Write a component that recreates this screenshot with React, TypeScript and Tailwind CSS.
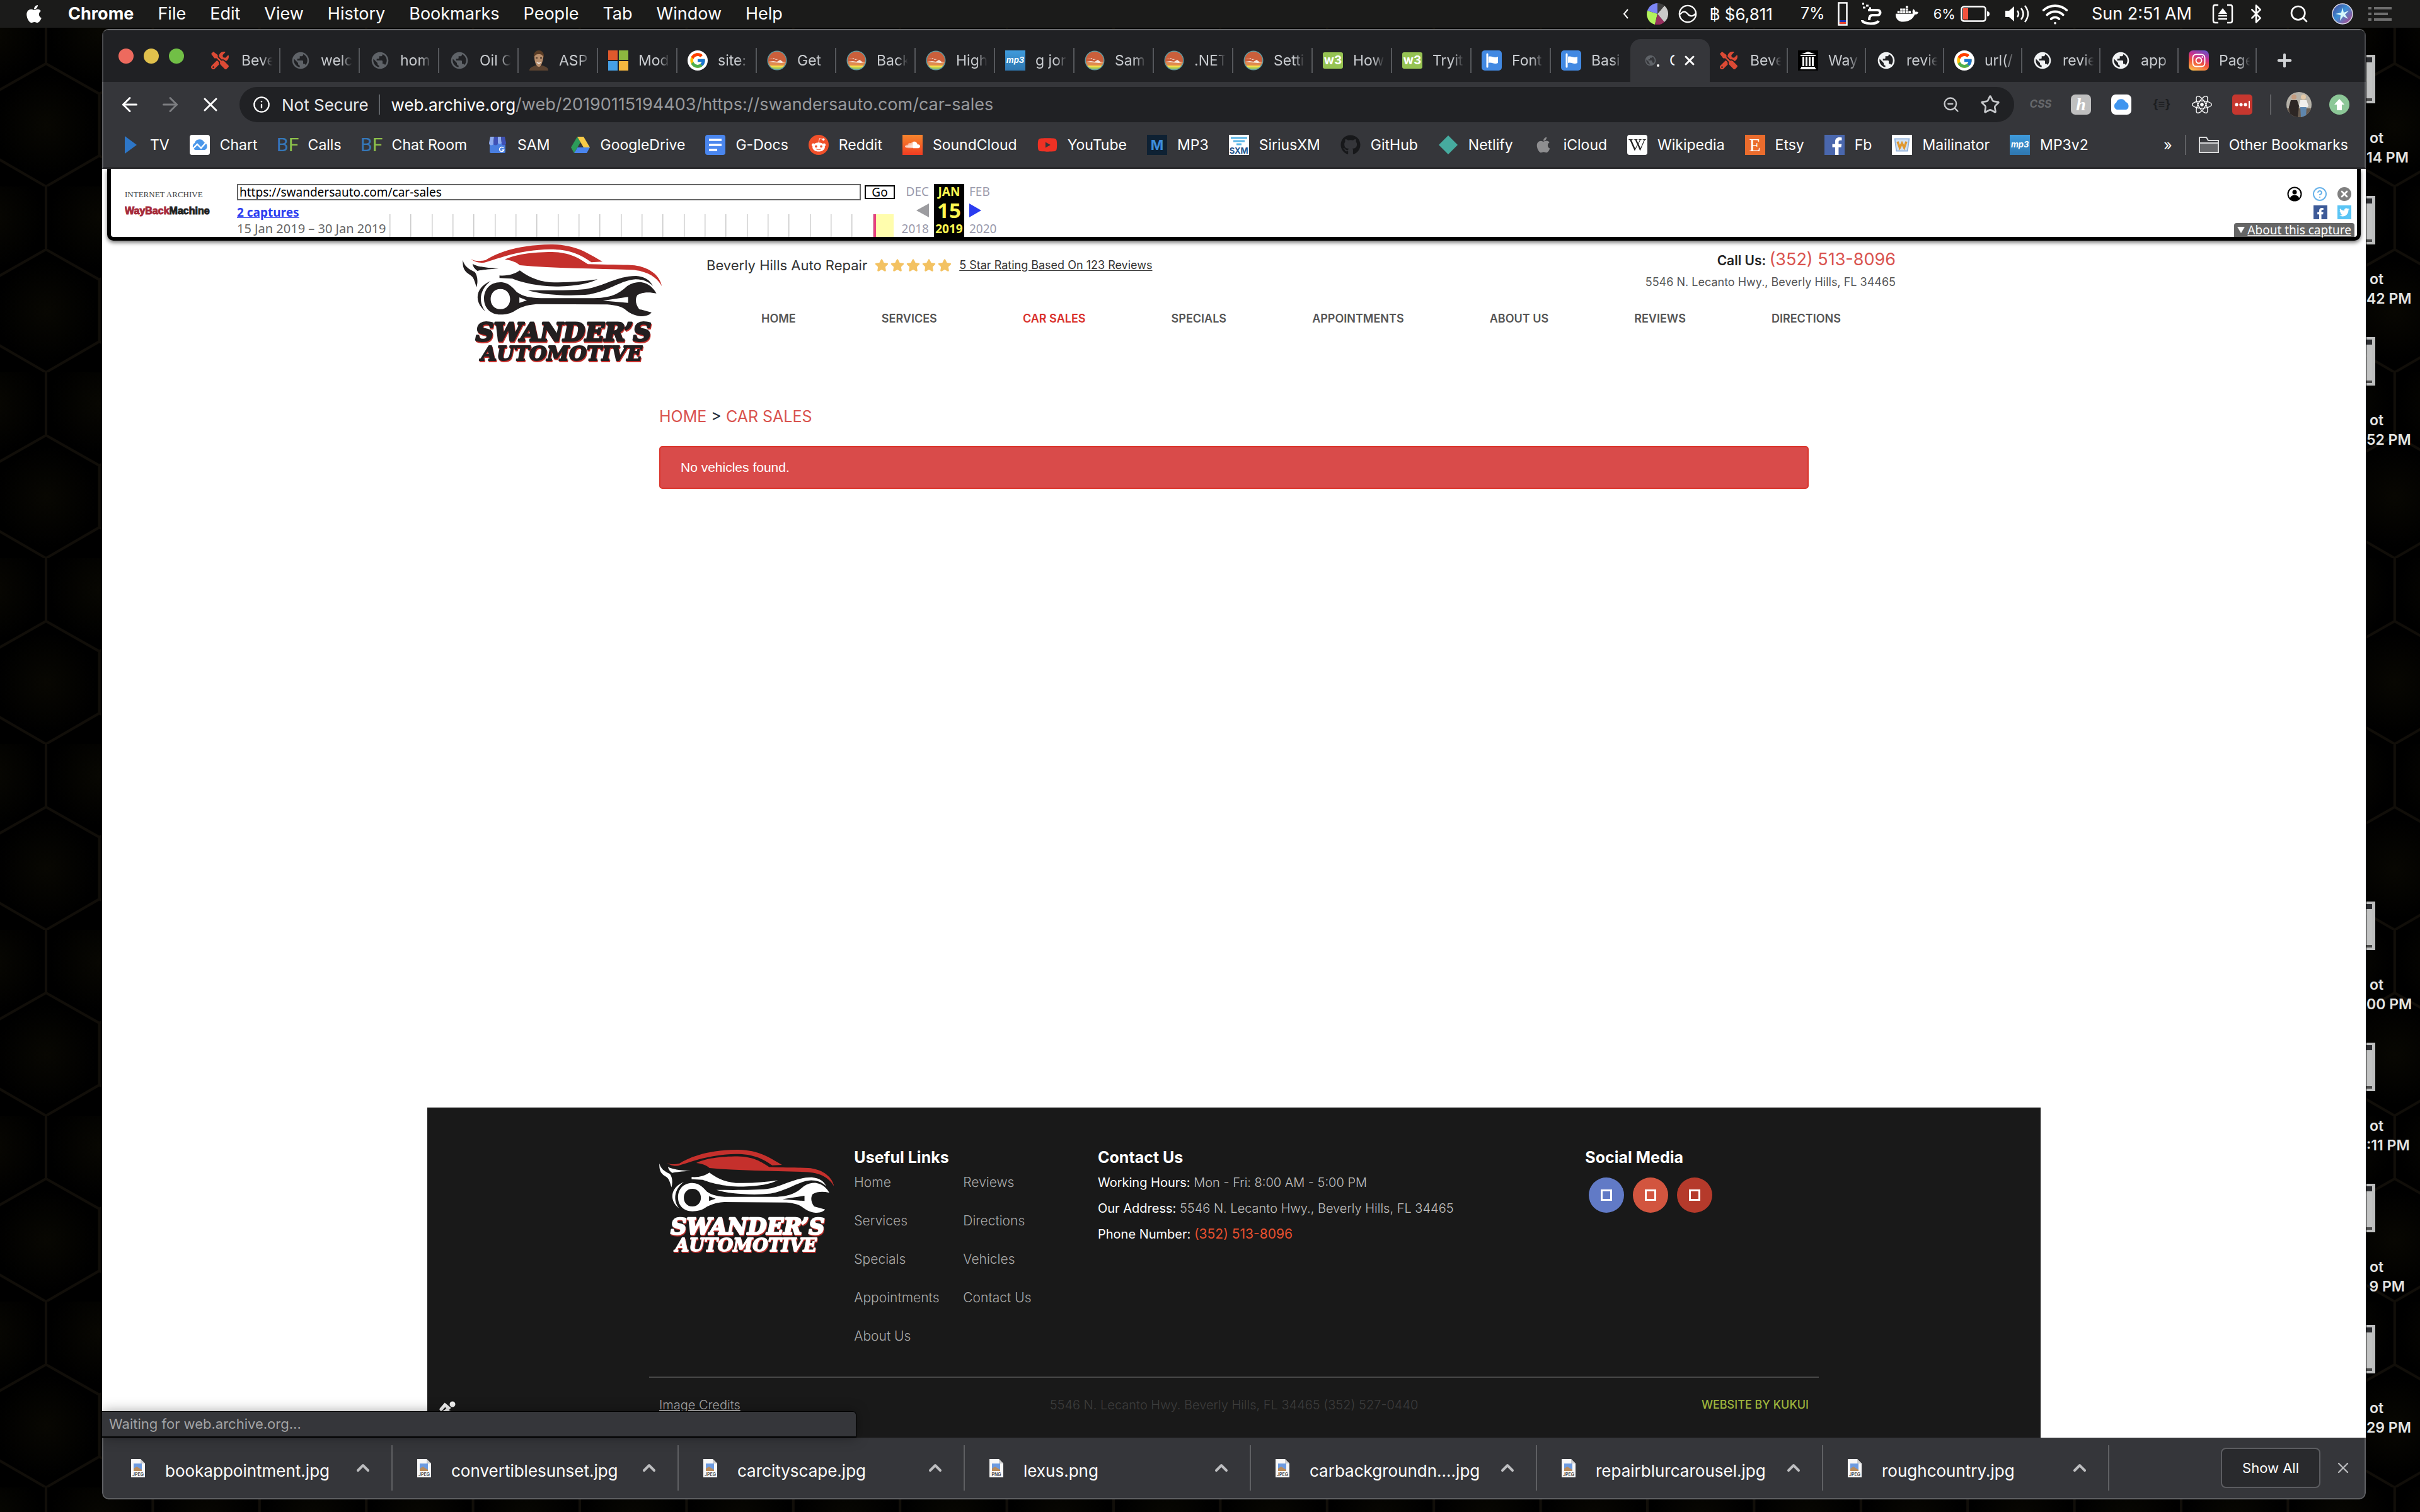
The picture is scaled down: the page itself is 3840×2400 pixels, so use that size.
import React from "react";
import {
  FaApple, FaDocker, FaFacebookF, FaGithub, FaInstagram, FaRedditAlien, FaReact, FaSoundcloud, FaTools,
  FaTwitter, FaWikipediaW, FaStar, FaYoutube,
} from "react-icons/fa";
import { FcGoogle } from "react-icons/fc";
import { MdPublic } from "react-icons/md";
import { ArrowLeft, ArrowRight, Bluetooth, ChevronUp, CircleHelp, Info, Plus, Search, Star, Wifi, X, ZoomOut } from "lucide-react";

/* ---------- favicons ---------- */

const Tile = ({ color, children }: { color: string; children?: React.ReactNode }) => (
  <span className={`flex size-8 shrink-0 items-center justify-center ${color}`}>{children}</span>
);

const ToolsIcon = () => <FaTools className="size-7 text-[#dc4a35]" />;
const GlobeDim = () => <MdPublic className="size-8 text-[#5f6368]" />;
const GlobeLight = () => <MdPublic className="size-8 text-[#f1f3f4]" />;

const SunsetIcon = () => (
  <svg viewBox="0 0 32 32" className="size-8">
    <clipPath id="sunset"><circle cx="16" cy="16" r="14" /></clipPath>
    <circle cx="16" cy="16" r="15.5" fill="#5f9aa0" />
    <g clipPath="url(#sunset)">
      <rect width="32" height="20" fill="#cb5f3b" />
      <rect y="19" width="32" height="5" fill="#e08a4f" />
      <rect y="24" width="32" height="3" fill="#f3e04a" />
      <rect y="27" width="32" height="5" fill="#a5c65a" />
      <path d="M3 13l5 1 3-2 3 3 4-1M2 18l8-1 6 1 5-3 4 3 6 0-8 2-10-1z" fill="#f7e9e0" />
    </g>
  </svg>
);

const MicrosoftIcon = () => (
  <svg viewBox="0 0 32 32" className="size-8">
    <path d="M0 0h15v15H0z" fill="#e0592c" />
    <path d="M17 0h15v15H17z" fill="#8cb73f" />
    <path d="M0 17h15v15H0z" fill="#45a0e6" />
    <path d="M17 17h15v15H17z" fill="#f6b83f" />
  </svg>
);

const PortraitIcon = () => (
  <svg viewBox="0 0 32 32" className="size-8">
    <path d="M1 32c0-5 5-6 9-8h12c5 2 9 3 9 8z" fill="#5b4331" />
    <path d="M9 11c0-8 4-10 7-10s8 3 7 10-3 15-7 15-7-8-7-15z" fill="#b98f6d" />
    <path d="M8 12C7 3 12 0 16 0s9 3 8 12c-2-5-4-6-8-6s-6 1-8 6z" fill="#5a3d26" />
    <path d="M12 18c2 2 6 2 8 0-1 4-7 4-8 0z" fill="#fff" />
    <path d="M11 12h3M18 12h3" stroke="#3a2a1c" strokeWidth="1.6" />
  </svg>
);

const GoogleIcon = () => (
  <span className="flex size-8 items-center justify-center rounded-full bg-white"><FcGoogle className="size-7" /></span>
);

const Mp3Icon = () => (
  <Tile color="bg-gradient-to-b from-[#3f9bdc] to-[#2f77b0]">
    <span className="font-[Inter] text-[13px] font-bold italic text-white">mp3</span>
  </Tile>
);
const W3Icon = () => (
  <span className="flex h-[26px] w-8 items-center justify-center rounded-[3px] bg-[#96c353] font-[Inter] text-[19px] font-bold text-white">w3</span>
);
const FlagIcon = () => (
  <Tile color="rounded-[5px] bg-[#4289e2]">
    <svg viewBox="0 0 32 32" className="size-8">
      <path d="M9 6v20" stroke="#fff" strokeWidth="3" strokeLinecap="round" />
      <path d="M11 10c5-2 9 3 15 0v10c-6 3-10-2-15 0z" fill="#fff" />
    </svg>
  </Tile>
);
const ArchiveIcon = () => (
  <Tile color="bg-black">
    <svg viewBox="0 0 32 32" className="size-8" fill="#f4f4f4">
      <path d="M16 2l11 4H5zM4 7h24v2H4zM5 26h22v2H5zM4 28h24v2H4z" />
      <path d="M7 10h3v15H7zM12 10h3v15h-3zM17 10h3v15h-3zM22 10h3v15h-3z" />
    </svg>
  </Tile>
);
const InstagramIcon = () => (
  <Tile color="rounded-[7px] bg-[linear-gradient(20deg,#fdc04e_5%,#f0553a_40%,#c9308f_65%,#5358cf_100%)]">
    <FaInstagram className="size-6 text-white" />
  </Tile>
);

/* ---------- bookmark icons ---------- */

const PlayIcon = () => (
  <svg viewBox="0 0 32 32" className="size-8"><path d="M8 2l19 14L8 30z" fill="#2d76c7" /></svg>
);
const CloudChartIcon = () => (
  <Tile color="rounded-[4px] bg-white">
    <svg viewBox="0 0 32 32" className="size-8">
      <path d="M9 24a6 6 0 0 1-1-11 8 8 0 0 1 15-1 6.500 6.500 0 0 1 1 12z" fill="#4a97ea" />
      <path d="M5 22l7-7 6 6 8-9" fill="none" stroke="#fff" strokeWidth="2.400" />
    </svg>
  </Tile>
);
const BfIcon = () => (
  <span className="flex w-8 justify-center font-[Roboto] text-[30px] leading-8">
    <span className="text-[#3577b8]">B</span><span className="text-[#8dc04a]">F</span>
  </span>
);
const StoreIcon = () => (
  <svg viewBox="0 0 32 32" className="size-8">
    <path d="M4 12h25v15a2 2 0 0 1-2 2H6a2 2 0 0 1-2-2z" fill="#4a7fe0" />
    <path d="M5 3h6l-1 10a3.500 3.500 0 0 1-7 0z" fill="#8fabee" />
    <path d="M11 3h6v10a3.500 3.500 0 0 1-7 0z" fill="#3f51b5" />
    <path d="M17 3h5l1 10a3.500 3.500 0 0 1-6 0z" fill="#8fabee" />
    <path d="M22 3h6l2 10a3.500 3.500 0 0 1-7 0z" fill="#3f51b5" />
    <path d="M26 21a3.500 3.500 0 1 0 .5 3h-3" fill="none" stroke="#fff" strokeWidth="1.600" />
  </svg>
);
const DriveIcon = () => (
  <svg viewBox="0 0 32 32" className="size-8">
    <path d="M11 3l5 9L6 29l-5-9z" fill="#2c9b5a" />
    <path d="M11 3h10l10 17H21z" fill="#f8cb47" />
    <path d="M11.500 20H31l-5 9H6z" fill="#4a85ee" />
  </svg>
);
const DocsIcon = () => (
  <Tile color="rounded-[4px] bg-[#4a86ee]">
    <svg viewBox="0 0 32 32" className="size-8" stroke="#fff" strokeWidth="3.500"><path d="M6 8h20M6 16h20M6 24h13" /></svg>
  </Tile>
);
const RedditIcon = () => <Tile color="rounded-full bg-[#f0502a]"><FaRedditAlien className="size-6 text-white" /></Tile>;
const SoundCloudIcon = () => (
  <Tile color="bg-gradient-to-b from-[#f5842d] to-[#f03a22]"><FaSoundcloud className="size-6 text-white" /></Tile>
);
const MIcon = () => (
  <Tile color="bg-[#0e2133]"><span className="font-[Inter] text-[22px] font-bold text-[#3d8ddb]">M</span></Tile>
);
const SiriusIcon = () => (
  <Tile color="flex-col bg-white">
    <svg viewBox="0 0 32 18" className="h-[18px] w-8" fill="none" stroke="#5bb5e6" strokeWidth="3">
      <path d="M3 4h26M7 9h18M12 14h8" />
    </svg>
    <span className="font-[Inter] text-[13px] font-bold leading-[13px] text-[#23528a]">SXM</span>
  </Tile>
);
const NetlifyIcon = () => <svg viewBox="0 0 32 32" className="size-8"><path d="M16 1l15 15-15 15L1 16z" fill="#46ab9f" /></svg>;
const WikiIcon = () => <Tile color="rounded-[4px] bg-white"><FaWikipediaW className="size-7 text-[#222]" /></Tile>;
const EtsyIcon = () => (
  <Tile color="bg-[#ea6c2d]"><span className="font-['Liberation_Serif'] text-[30px] leading-8 text-white">E</span></Tile>
);
const FbIcon = () => (
  <Tile color="bg-[#4a67ad]"><FaFacebookF className="mt-1 ml-2 size-7 text-white" /></Tile>
);
const MailinatorIcon = () => (
  <Tile color="bg-white">
    <svg viewBox="0 0 32 32" className="size-7">
      <path d="M3 5h26l-3 22H6z" fill="#cfdff2" stroke="#8fb1dc" strokeWidth="2" />
      <path d="M8 10l4 11 4-8 4 8 4-11" fill="none" stroke="#e0982f" strokeWidth="4" />
    </svg>
  </Tile>
);

/* ---------- data ---------- */

type Item = [React.FC, string];

const leftTabs: Item[] = [
  [ToolsIcon, "Beve"], [GlobeDim, "welc"], [GlobeDim, "hom"], [GlobeDim, "Oil C"], [PortraitIcon, "ASP"],
  [MicrosoftIcon, "Mod"], [GoogleIcon, "site:"], [SunsetIcon, "Get"], [SunsetIcon, "Back"], [SunsetIcon, "High"],
  [Mp3Icon, "g jor"], [SunsetIcon, "Sam"], [SunsetIcon, ".NET"], [SunsetIcon, "Setti"], [W3Icon, "How"],
  [W3Icon, "Tryit"], [FlagIcon, "Font"], [FlagIcon, "Basi"],
];
const rightTabs: Item[] = [
  [ToolsIcon, "Beve"], [ArchiveIcon, "Way"], [GlobeLight, "revie"], [GoogleIcon, "url(/"], [GlobeLight, "revie"],
  [GlobeLight, "app"], [InstagramIcon, "Page"],
];
const bookmarks: Item[] = [
  [PlayIcon, "TV"], [CloudChartIcon, "Chart"], [BfIcon, "Calls"], [BfIcon, "Chat Room"], [StoreIcon, "SAM"],
  [DriveIcon, "GoogleDrive"], [DocsIcon, "G-Docs"], [RedditIcon, "Reddit"], [SoundCloudIcon, "SoundCloud"],
  [() => <FaYoutube className="size-8 text-[#ee3124]" />, "YouTube"], [MIcon, "MP3"], [SiriusIcon, "SiriusXM"],
  [() => <FaGithub className="size-8 text-[#17181a]" />, "GitHub"], [NetlifyIcon, "Netlify"],
  [() => <FaApple className="size-7 text-[#8e8e90]" />, "iCloud"], [WikiIcon, "Wikipedia"], [EtsyIcon, "Etsy"],
  [FbIcon, "Fb"], [MailinatorIcon, "Mailinator"], [Mp3Icon, "MP3v2"],
];
const siteNav = ["HOME", "SERVICES", "CAR SALES", "SPECIALS", "APPOINTMENTS", "ABOUT US", "REVIEWS", "DIRECTIONS"];
const footerLinks = [
  ["Home", "Services", "Specials", "Appointments", "About Us"],
  ["Reviews", "Directions", "Vehicles", "Contact Us"],
];
const downloads = [
  "bookappointment.jpg", "convertiblesunset.jpg", "carcityscape.jpg", "lexus.png", "carbackgroundn....jpg",
  "repairblurcarousel.jpg", "roughcountry.jpg",
];
const desktopFiles = ["14 PM", "42 PM", "52 PM", "", "", "", "00 PM", ":11 PM", "9 PM", "29 PM"];

/* ---------- desktop ---------- */

const Wallpaper = () => (
  <svg className="absolute inset-0 size-full" aria-hidden="true">
    <defs>
      <radialGradient id="glow"><stop offset="0" stopColor="#080702" /><stop offset="1" stopColor="#000000" /></radialGradient>
      <pattern id="hex" width="169.4" height="295" patternUnits="userSpaceOnUse" x="73" y="1">
        <rect width="169.4" height="295" fill="#000" />
        <circle cx="84.700" cy="50" r="80" fill="url(#glow)" />
        <circle cx="0" cy="198" r="80" fill="url(#glow)" />
        <circle cx="169.4" cy="198" r="80" fill="url(#glow)" />
        <path
          d="M0 0v100L84.700 148v98L0 295M169.400 0v100L84.700 148M84.700 246L169.400 295"
          fill="none" stroke="#110e09" strokeWidth="4"
        />
      </pattern>
    </defs>
    <rect width="100%" height="100%" fill="url(#hex)" />
  </svg>
);

const DesktopFiles = () => (
  <aside className="absolute top-[87px] right-0 w-[85px] font-[Inter] text-[23px] font-semibold leading-[31px] text-[#e4e4e2]">
    {desktopFiles.map((name, i) => (
      <div key={i} className="h-[224px]">
        {name && (
          <>
            <div className="h-[77px] w-[14px] border-y-4 border-r-[5px] border-[#bdbebe] bg-[#c2c3c3]">
              <div className="h-2 bg-[#2b2c30]" />
              <div className="mt-[57px] h-1 bg-[#4a4a4a]" />
            </div>
            <p className="mt-10 pr-[58px] text-right">ot</p>
            <p className="pr-6 text-right whitespace-nowrap">{name}</p>
          </>
        )}
      </div>
    ))}
  </aside>
);

const MenuBar = () => (
  <header className="relative flex h-11 items-center bg-[#1b1b1a] pr-11 pl-[38px] font-[Inter] text-[27px] text-white">
    <FaApple className="size-8" />
    <nav className="ml-[38px] flex items-center gap-[38px]">
      <button className="font-bold">Chrome</button>
      {["File", "Edit", "View", "History", "Bookmarks", "People", "Tab", "Window", "Help"].map((m) => (
        <button key={m}>{m}</button>
      ))}
    </nav>
    <div className="ml-auto flex items-center whitespace-nowrap">
      <svg viewBox="0 0 10 16" className="h-4 w-[10px]"><path d="M8 1L2 8l6 7" fill="none" stroke="#fff" strokeWidth="2" /></svg>
      <svg viewBox="0 0 34 34" className="ml-7 size-[34px]">
        <path d="M17 17L17 0A17 17 0 0 0 1 12z" fill="#7c86f5" />
        <path d="M17 17L1 12a17 17 0 0 0 12 22z" fill="#b2f35c" />
        <path d="M17 17l-4 17a17 17 0 0 0 15-4z" fill="#99305f" />
        <path d="M17 17l11 13A17 17 0 0 0 28 4z" fill="#c9c9c9" />
        <path d="M17 17L28 4A17 17 0 0 0 17 0z" fill="#3d3d3d" />
      </svg>
      <svg viewBox="0 0 32 32" className="ml-4 size-[30px]" fill="none" stroke="#fff" strokeWidth="2.500">
        <circle cx="16" cy="16" r="14" /><path d="M3 17c5-6 9-6 13-1s8 5 14-1" />
      </svg>
      <span className="ml-5 text-[26px]">฿ $6,811</span>
      <span className="ml-11 text-[25px]">7%</span>
      <svg viewBox="0 0 16 38" className="ml-5 h-[38px] w-4">
        <rect x="1.500" y="1.500" width="13" height="35" fill="none" stroke="#fff" strokeWidth="2.500" />
        <path d="M3 29h10v3H3z" fill="#1d2fa8" /><path d="M3 32h10v3H3z" fill="#e5432f" />
      </svg>
      <svg viewBox="0 0 36 36" className="ml-5 size-9" fill="none" stroke="#fff" strokeWidth="4">
        <path d="M12 12h15c6 0 6 8 0 8h-8c-4 0-5 3-5 8" /><path d="M3 28c0 7 24 7 26 1" />
        <path d="M3 2h3M9 5h4M4 8h4M14 9h3" strokeWidth="3" />
      </svg>
      <FaDocker className="ml-5 size-9" />
      <span className="ml-6 text-[22px]">6%</span>
      <svg viewBox="0 0 46 26" className="ml-2 h-[26px] w-[46px]">
        <rect x="1.500" y="1.500" width="38" height="23" rx="4" fill="none" stroke="#fff" strokeWidth="2.500" />
        <rect x="4" y="4" width="8" height="18" fill="#f0523d" /><path d="M42 9a4 4 0 0 1 0 8z" fill="#fff" />
      </svg>
      <svg viewBox="0 0 42 32" className="ml-6 h-8 w-[42px]" fill="none" stroke="#fff" strokeWidth="2.500">
        <path d="M1 11h6l8-7v24l-8-7H1z" fill="#fff" stroke="none" />
        <path d="M20 11q4 5 0 10M26 7q7 9 0 18M32 3q10 13 0 26" />
      </svg>
      <Wifi className="ml-4 size-11" strokeWidth={2} />
      <span className="ml-9">Sun 2:51 AM</span>
      <svg viewBox="0 0 34 32" className="ml-8 h-8 w-[34px]" fill="none" stroke="#fff" strokeWidth="2.500">
        <path d="M10 2H5q-3 0-3 3v22q0 3 3 3h5M24 2h5q3 0 3 3v22q0 3-3 3h-5" />
        <path d="M17 7l7 9H10z" fill="#fff" stroke="none" /><path d="M10 19h14M10 24h14" />
      </svg>
      <Bluetooth className="ml-5 size-8" />
      <Search className="ml-9 size-8" />
      <svg viewBox="0 0 34 34" className="ml-9 size-[34px]">
        <defs>
          <linearGradient id="siri" x1="0" y1="0" x2="1" y2="1">
            <stop offset="0" stopColor="#4a3f8c" /><stop offset=".45" stopColor="#3b8fd6" /><stop offset="1" stopColor="#c23a7c" />
          </linearGradient>
        </defs>
        <circle cx="17" cy="17" r="16" fill="url(#siri)" stroke="#d8d8e8" strokeWidth="1.500" />
        <path d="M17 7l2 8 8-3-6 6 5 7-8-4-5 7 1-9-8-2 9-2z" fill="#d6f7fb" />
      </svg>
      <svg viewBox="0 0 38 24" className="ml-6 h-6 w-[38px]" stroke="#6e6e6e" strokeWidth="4">
        <path d="M0 3h5M9 3h28M0 12h5M9 12h22M0 21h5M9 21h28" />
      </svg>
    </div>
  </header>
);

/* ---------- browser chrome ---------- */

const Tab = ({ item, narrow }: { item: Item; narrow?: boolean }) => {
  const Icon = item[0];
  return (
    <button className={`flex h-[68px] shrink-0 items-center ${narrow ? "w-[124px]" : "w-[126px]"}`}>
      <span className="flex h-10 w-full items-center gap-4 border-r-2 border-[#55575b] pl-4">
        <span className="flex w-8 shrink-0 items-center"><Icon /></span>
        <span className="w-[54px] overflow-hidden text-left whitespace-nowrap text-[#c8cbcf] [mask-image:linear-gradient(to_right,#000_60%,transparent_92%)]">
          {item[1]}
        </span>
      </span>
    </button>
  );
};

const TabStrip = () => (
  <div className="flex h-[82px] items-end border-x-2 border-[#48494c] bg-[#202124] pl-6 font-[Inter] text-[23px]">
    <div className="flex h-full shrink-0 items-center gap-4">
      <button aria-label="Close" className="size-6 rounded-full bg-[#ed6a5e]" />
      <button aria-label="Minimize" className="size-6 rounded-full bg-[#e0c04c]" />
      <button aria-label="Zoom" className="size-6 rounded-full bg-[#71bf46]" />
    </div>
    <div className="ml-[27px] flex items-end">
      {leftTabs.slice(0, 17).map((t, i) => <Tab key={i} item={t} />)}
      <div className="[&_span]:border-transparent"><Tab item={leftTabs[17]} /></div>
      <div className="flex h-[68px] w-[126px] items-center rounded-t-2xl bg-[#35363a] pl-[22px] text-white">
        <MdPublic className="size-5 text-[#5f6368]" />
        <span className="mt-4 size-1 rounded-full bg-white" />
        <span className="ml-4 w-2 overflow-hidden">C</span>
        <button aria-label="Close tab" className="ml-3"><X className="size-6" strokeWidth={3} /></button>
      </div>
      {rightTabs.map((t, i) => <Tab key={i} item={t} narrow />)}
    </div>
    <button aria-label="New tab" className="ml-7 flex h-[68px] items-center"><Plus className="size-8 text-[#d0d2d5]" strokeWidth={3} /></button>
  </div>
);

const Toolbar = () => (
  <div className="flex h-[72px] items-center border-x-2 border-[#5f6063] bg-[#35363a] pr-6 pl-6 font-[Inter] text-[26px] text-white">
    <div className="flex items-center gap-7">
      <button aria-label="Back"><ArrowLeft className="size-9" /></button>
      <button aria-label="Forward"><ArrowRight className="size-9 text-[#7c7d80]" /></button>
      <button aria-label="Stop"><X className="size-9" /></button>
    </div>
    <div className="ml-7 flex h-14 flex-1 items-center rounded-full bg-[#202124] pr-[22px] pl-[21px]">
      <Info className="size-7" />
      <span className="ml-[18px] text-[#e8eaed]">Not Secure</span>
      <span className="ml-4 h-8 w-0.5 bg-[#5f6368]" />
      <label htmlFor="address" className="ml-[18px]">web.archive.org</label>
      <input
        id="address" type="text" defaultValue="/web/20190115194403/https://swandersauto.com/car-sales"
        className="min-w-0 flex-1 bg-transparent text-[27px] text-[#97999c] outline-none"
      />
      <button aria-label="Zoom page"><ZoomOut className="size-7 text-[#c6c8cb]" /></button>
      <button aria-label="Bookmark page" className="ml-8"><Star className="size-8 text-[#c6c8cb]" /></button>
    </div>
    <div className="ml-[26px] flex items-center gap-8">
      <span className="flex w-8 justify-center text-[17px] font-bold italic text-[#66686b]">CSS</span>
      <Tile color="rounded-[7px] bg-[#bfbfbf]"><span className="font-['Liberation_Serif'] text-[28px] font-bold italic leading-8 text-white">h</span></Tile>
      <Tile color="rounded-[7px] bg-white">
        <svg viewBox="0 0 32 32" className="size-8"><path d="M9 24a6 6 0 0 1-1-11 8 8 0 0 1 15-1 6.500 6.500 0 0 1 1 12z" fill="#3f95ef" /></svg>
      </Tile>
      <span className="flex w-8 justify-center text-[19px] font-bold text-[#1c1d1f]">{"{≡}"}</span>
      <FaReact className="size-8" />
      <Tile color="rounded-[5px] bg-[#c7372f]">
        <svg viewBox="0 0 32 32" className="size-8" fill="#fff">
          <circle cx="7" cy="16" r="2.600" /><circle cx="14" cy="16" r="2.600" /><circle cx="21" cy="16" r="2.600" /><path d="M26 10h2v12h-2z" />
        </svg>
      </Tile>
    </div>
    <span className="ml-7 h-8 w-0.5 bg-[#5f6063]" />
    <svg viewBox="0 0 40 40" className="ml-6 size-10">
      <clipPath id="avatar"><circle cx="20" cy="20" r="20" /></clipPath>
      <g clipPath="url(#avatar)">
        <rect width="40" height="40" fill="#b5b1a8" /><rect y="26" width="40" height="14" fill="#6a5d50" />
        <circle cx="12" cy="8" r="4" fill="#c59c80" /><path d="M7 13h10l3 9-2 18H6L4 24z" fill="#2d2624" />
        <circle cx="27" cy="8" r="4" fill="#e3c9a8" /><path d="M22 13h10l3 9-3 4h-9l-3-5z" fill="#f1efec" /><path d="M22 24h10l-1 16h-8z" fill="#5f86ad" />
      </g>
    </svg>
    <span className="ml-7 flex size-8 items-center justify-center rounded-full bg-[#8cc797]">
      <svg viewBox="0 0 18 20" className="h-5 w-[18px]"><path d="M9 1l8 9h-4v9H5v-9H1z" fill="#fff" /></svg>
    </span>
  </div>
);

const BookmarksBar = () => (
  <div className="border-x-2 border-b-[3px] border-x-[#5f6063] border-b-[#2a2a2d] bg-[#35363a] pb-[7px] font-[Inter] text-[23px] text-white">
    <div className="flex h-14 items-center pr-[26px] pl-[26px]">
      <nav className="flex items-center gap-8">
        {bookmarks.map(([Icon, label]) => (
          <a key={label} href="#" className="flex items-center gap-4 whitespace-nowrap">
            <span className="flex w-8 shrink-0 justify-center"><Icon /></span>
            {label}
          </a>
        ))}
      </nav>
      <button className="ml-auto" aria-label="More bookmarks">»</button>
      <span className="mx-5 h-8 w-0.5 bg-[#5f6063]" />
      <button className="flex items-center gap-4">
        <svg viewBox="0 0 32 28" className="h-7 w-8" fill="none" stroke="#d8d9da" strokeWidth="2">
          <path d="M1 26V2h11l3 5h16v19z" /><path d="M1 11h30v15H1z" fill="#66676a" />
        </svg>
        Other Bookmarks
      </button>
    </div>
  </div>
);

/* ---------- archive banner ---------- */

const CaptureChart = () => (
  <svg viewBox="0 0 800 36" className="h-9 w-[800px] self-end">
    <path d="M768 0h32v36h-32z" fill="#fffdad" />
    {Array.from({ length: 24 }, (_, i) => (
      <rect key={i} x={Math.round((i * 800) / 24)} y="0" width="1.500" height="36" fill="#ccc" />
    ))}
    <path d="M768 0h4v36h-4z" fill="#e8417e" />
  </svg>
);

const ArchiveBanner = () => (
  <section className="mx-2 flex h-[114px] rounded-b-[10px] border-x-[6px] border-b-[6px] border-black bg-white font-['Noto_Sans'] text-[19px] leading-[25px] shadow-[0_3px_6px_rgba(0,0,0,0.55)]">
    <a href="#" aria-label="Internet Archive Wayback Machine" className="mt-9 ml-[22px] w-[178px]">
      <svg viewBox="0 0 140 48" className="h-12 w-[140px]">
        <text x="0" y="9" fontFamily="Liberation Serif" fontSize="13" fill="#444">INTERNET ARCHIVE</text>
        <text x="0" y="36" fontFamily="Liberation Sans" fontWeight="700" fontSize="16" fill="#a62a3a" stroke="#a62a3a" strokeWidth="1">
          WayBack<tspan fill="#222" stroke="#222">Machine</tspan>
        </text>
      </svg>
    </a>
    <div className="mt-6 flex w-[1044px] flex-col text-[#666]">
      <form className="flex items-center gap-[6px] text-black">
        <input
          type="text" aria-label="Archived address" defaultValue="https://swandersauto.com/car-sales"
          className="h-[26px] min-w-0 flex-1 border-2 border-[#666] bg-white px-0.5"
        />
        <button type="button" className="h-[22px] w-12 border-2 border-black leading-[17px]">Go</button>
      </form>
      <div className="flex flex-1 justify-between pt-[7px] pr-0.5">
        <div className="whitespace-nowrap">
          <a href="#" className="block font-bold text-[#2a3bf0] underline">2 captures</a>
          <p className="text-[20px]">15 Jan 2019 – 30 Jan 2019</p>
        </div>
        <CaptureChart />
      </div>
    </div>
    <table className="mt-6 h-[84px] text-[#9a9aac]">
      <tbody>
        <tr>
          <td className="w-[62px] pr-2 text-right">DEC</td>
          <td className="w-12 bg-black text-center font-bold text-[#fdf751]">JAN</td>
          <td className="w-[62px] pl-2">FEB</td>
        </tr>
        <tr>
          <td className="pr-2">
            <svg viewBox="0 0 20 22" className="ml-auto h-[22px] w-5"><path d="M20 0v22L0 11z" fill="#9c9ca0" /></svg>
          </td>
          <td className="bg-black text-center text-[33px] font-bold leading-[34px] text-[#fdf751]">15</td>
          <td className="pl-2"><svg viewBox="0 0 20 22" className="h-[22px] w-5"><path d="M0 0v22l19-11z" fill="#2a3bf0" /></svg></td>
        </tr>
        <tr>
          <td className="pr-2 text-right">2018</td>
          <td className="bg-black text-center font-bold text-[#fdf751]">2019</td>
          <td className="pl-2">2020</td>
        </tr>
      </tbody>
    </table>
    <div className="ml-auto flex flex-col items-end justify-end gap-[6px] pr-1">
      <div className="flex items-center gap-4 pr-[5px]">
        <svg viewBox="0 0 24 24" className="size-6">
          <circle cx="12" cy="12" r="10.500" fill="none" stroke="#000" strokeWidth="2" />
          <circle cx="12" cy="9" r="3.500" /><path d="M5 19c0-7 14-7 14 0-4 4-10 4-14 0z" />
        </svg>
        <CircleHelp className="size-6 text-[#69b3ea]" />
        <span className="flex size-[22px] items-center justify-center rounded-full bg-[#808080]"><X className="size-4 text-white" strokeWidth={4} /></span>
      </div>
      <div className="flex items-center gap-4 pr-[5px]">
        <span className="flex size-[22px] items-end justify-center bg-[#3d5a98]"><FaFacebookF className="size-[18px] text-white" /></span>
        <span className="flex size-[22px] items-center justify-center bg-[#5bc5f5]"><FaTwitter className="size-4 text-white" /></span>
      </div>
      <button className="flex h-[22px] items-center gap-1 rounded-t-[4px] bg-[#666] px-[5px] leading-[22px] text-white">
        <svg viewBox="0 0 12 10" className="h-[10px] w-3"><path d="M0 0h12L6 10z" fill="#fff" /></svg>
        <span className="underline">About this capture</span>
      </button>
    </div>
  </section>
);

/* ---------- dealership site ---------- */

const SwanderLogo = ({ ink, className }: { ink: string; className: string }) => (
  <svg viewBox="0 0 316 188" className={className} role="img" aria-label="Swander's Automotive">
    <g transform="matrix(0.7015 0 0 0.3333 -584 -138)" fill={ink}>
      <g fill="#c5302c">
        <path d="M851 484C862 496 872 494 885 488C905 462 950 415 1035 414C1090 416 1115 455 1149 496L1124 499C1100 462 1075 437 1030 437C960 440 915 480 882 500C868 504 860 496 851 484Z" />
        <path d="M928 486C950 462 990 450 1035 450C1075 452 1095 478 1116 508C1160 511 1190 510 1217 513C1250 518 1278 555 1283 612C1275 580 1255 540 1215 535C1130 528 1040 528 962 513C955 500 945 490 928 486Z" />
      </g>
      <path d="M833 488C836 515 845 530 860 545C866 560 868 590 864 618C860 590 858 570 850 560C838 545 832 530 833 488Z" />
      <path d="M855 506C865 520 885 525 914 529C890 532 875 536 866 540C860 530 856 520 855 506Z" />
      <path d="M962 538C975 560 1000 590 1030 594C1070 597 1105 590 1138 580C1120 600 1090 612 1050 614C1000 616 960 590 945 577L916 574L916 562C935 565 950 555 962 538Z" />
      <path d="M980 632C1030 633 1080 633 1110 627C1150 615 1180 565 1225 564C1248 568 1258 590 1263 612C1252 590 1240 580 1224 580C1190 585 1170 630 1120 652C1070 663 1010 652 980 632Z" />
      <path d="M896 588C860 620 858 690 884 732C868 690 870 630 896 588Z" />
      <path
        fillRule="evenodd"
        d="M918 594C938 594 948 625 956 642C970 662 985 668 1010 670L1130 670C1175 668 1190 640 1205 612C1215 598 1228 592 1237 594C1255 600 1265 625 1271 647C1255 640 1240 640 1228 655C1222 675 1224 700 1232 722L1260 738C1255 752 1245 756 1235 756C1220 752 1210 740 1203 728C1195 712 1180 703 1160 700L1000 698C975 702 962 715 952 728C942 742 932 748 918 748C895 748 881 715 881 672C881 628 895 594 918 594ZM918 626C904 626 896 648 896 674C896 700 904 722 918 722C932 722 940 700 940 674C940 648 932 626 918 626ZM961 666L978 680L961 692ZM1150 682L1207 664L1207 692Z"
      />
    </g>
    <g
      fontFamily="DejaVu Serif" fontWeight="700" fontStyle="italic" textAnchor="middle" strokeLinejoin="round"
      fill={ink} stroke={ink} strokeWidth="3" className="drop-shadow-[1px_2px_0_#c5302c]"
    >
      <text x="160" y="153" fontSize="40">SWANDER’S</text>
      <text x="157" y="184" fontSize="32" strokeWidth="2">AUTOMOTIVE</text>
    </g>
  </svg>
);

const SiteHeader = () => (
  <header className="mx-auto mt-[6px] flex w-full max-w-[2448px] pr-[174px] font-[Inter]">
    <a href="#" className="shrink-0"><SwanderLogo ink="#231f20" className="h-[188px] w-[316px]" /></a>
    <div className="ml-[71px] flex-1 pt-[6px]">
      <div className="flex items-start justify-between">
        <div className="mt-[9px] flex items-center gap-3 text-[22px] leading-9 text-[#333]">
          <span>Beverly Hills Auto Repair</span>
          <span className="flex gap-[3px] text-[#f3c262]">
            {[0, 1, 2, 3, 4].map((i) => <FaStar key={i} className="size-[22px]" />)}
          </span>
          <a href="#" className="text-[18px] underline underline-offset-2">5 Star Rating Based On 123 Reviews</a>
        </div>
        <div className="text-right">
          <p className="text-[21px] font-semibold leading-9 text-[#222]">
            Call Us: <a href="#" className="text-[27px] font-normal text-[#d9534f]">(352) 513-8096</a>
          </p>
          <p className="text-[18px] leading-8 text-[#555]">5546 N. Lecanto Hwy., Beverly Hills, FL 34465</p>
        </div>
      </div>
      <nav className="mt-[27px] flex justify-between px-[87px] text-[18px] font-semibold leading-[30px] text-[#555]">
        {siteNav.map((n) => (
          <a key={n} href="#" className={n === "CAR SALES" ? "text-[#d9302b]" : ""}>{n}</a>
        ))}
      </nav>
    </div>
  </header>
);

const SiteMain = () => (
  <main className="mx-auto w-full max-w-[1824px] pt-[65px]">
    <p className="font-[Inter] text-[25px] leading-10 text-[#222b3a]">
      <a href="#" className="text-[#d9534f]">HOME</a> &gt; <a href="#" className="text-[#d9534f]">CAR SALES</a>
    </p>
    <div role="alert" className="mt-[27px] flex h-[68px] items-center rounded-[5px] border-2 border-[#db362d] bg-[#d94b4a] px-8 font-['Liberation_Sans'] text-[21px] text-white">
      No vehicles found.
    </div>
  </main>
);

const FooterHeading = ({ children }: { children: React.ReactNode }) => (
  <h2 className="text-[25px] font-bold leading-9 text-white">{children}</h2>
);

const socialColors = ["bg-[#617ac6]", "bg-[#d2553f]", "bg-[#b53a2b]"];

const SiteFooter = () => (
  <footer className="relative mx-auto mt-auto w-full max-w-[2560px] bg-[#191919] pt-[61px] pb-[37px] font-[Inter] text-[20px] text-[#aaa]">
    <div className="mx-auto w-full max-w-[1856px]">
      <div className="grid grid-cols-[4fr_5fr_10fr_5fr]">
        <div className="px-4 pt-[6px]"><SwanderLogo ink="#ffffff" className="w-full" /></div>
        <div className="px-4">
          <FooterHeading>Useful Links</FooterHeading>
          <div className="mt-[6px] flex text-[21px] font-light leading-8">
            {footerLinks.map((col, i) => (
              <ul key={i} className="flex w-[173px] flex-col gap-[29px]">
                {col.map((l) => <li key={l}><a href="#">{l}</a></li>)}
              </ul>
            ))}
          </div>
        </div>
        <div className="px-4">
          <FooterHeading>Contact Us</FooterHeading>
          <div className="mt-[6px] flex flex-col gap-[9px] font-light leading-8 text-[#c0c0c0]">
            <p><b className="text-white">Working Hours:</b> Mon - Fri: 8:00 AM - 5:00 PM</p>
            <p><b className="text-white">Our Address:</b> 5546 N. Lecanto Hwy., Beverly Hills, FL 34465</p>
            <p><b className="text-white">Phone Number:</b> <a href="#" className="text-[21px] font-normal text-[#e8502f]">(352) 513-8096</a></p>
          </div>
        </div>
        <div className="px-4">
          <FooterHeading>Social Media</FooterHeading>
          <div className="mt-[14px] flex gap-[14px] pl-[6px]">
            {socialColors.map((c) => (
              <a key={c} href="#" aria-label="Social profile" className={`flex size-14 items-center justify-center rounded-full ${c}`}>
                <span className="size-[18px] border-[3px] border-white" />
              </a>
            ))}
          </div>
        </div>
      </div>
      <hr className="mt-[48px] border-t-2 border-[#484848]" />
      <div className="mt-7 grid grid-cols-[1fr_auto_1fr] px-4 font-light leading-[30px]">
        <a href="#" className="underline underline-offset-1">Image Credits</a>
        <span className="text-[#3d3d3d]">5546 N. Lecanto Hwy. Beverly Hills, FL 34465 (352) 527-0440</span>
        <a href="#" className="text-right text-[18px] font-medium text-[#9db43c]">WEBSITE BY KUKUI</a>
      </div>
    </div>
    <svg viewBox="0 0 26 26" className="absolute bottom-8 left-[19px] size-[26px]" fill="none" stroke="#f2f2f2" strokeWidth="5" strokeLinecap="round">
      <circle cx="21" cy="5" r="2" fill="#f2f2f2" /><path d="M3 13l6-7 6 5-4 4 6 3" /><path d="M8 17a6 6 0 1 0 8 9" />
    </svg>
  </footer>
);

/* ---------- downloads ---------- */

const FileIcon = ({ kind }: { kind: string }) => (
  <svg viewBox="0 0 22 29" className="h-[29px] w-[22px] shrink-0">
    <path d="M0 0h15l7 7v22H0z" fill="#f8f8f8" /><path d="M15 0l7 7h-7z" fill="#cfcfcf" />
    <rect x="4" y="7" width="13" height="12" fill="#6d9be0" /><path d="M4 15l5-3 8 5v2H4z" fill="#b98c5c" />
    <text x="11" y="27" fontFamily="Inter" fontSize="7" fontWeight="600" textAnchor="middle" fill="#444">{kind}</text>
  </svg>
);

const DownloadsBar = () => (
  <div className="flex h-[98px] items-center rounded-b-[10px] border-x-2 border-b-2 border-[#5f6063] bg-[#35363a] pr-5 pl-[5px] font-[Inter] text-white">
    {downloads.map((d) => (
      <div key={d} className="flex h-[72px] w-[454px] shrink-0 items-center border-r-2 border-[#5f6063] pr-[29px] pl-[39px] text-[26px]">
        <FileIcon kind={d.endsWith("png") ? "PNG" : "JPEG"} />
        <span className="ml-8 pt-2 whitespace-nowrap">{d}</span>
        <button aria-label={`Options for ${d}`} className="ml-auto"><ChevronUp className="size-8 text-[#bdbec0]" strokeWidth={3} /></button>
      </div>
    ))}
    <button className="ml-auto h-16 w-[158px] rounded-lg border-2 border-[#5b5c60] bg-[#292a2d] text-[22px]">Show All</button>
    <button aria-label="Close downloads" className="ml-[22px]"><X className="size-7 text-[#bdbec0]" /></button>
  </div>
);

export default function App() {
  return (
    <div className="relative flex min-h-screen flex-col overflow-hidden bg-black">
      <Wallpaper />
      <MenuBar />
      <DesktopFiles />
      <div className="relative mt-0.5 mr-[86px] mb-5 ml-[162px] flex flex-1 flex-col overflow-hidden rounded-[10px] border-t-2 border-[#6a6b6d]">
        <TabStrip />
        <Toolbar />
        <BookmarksBar />
        <div className="relative flex flex-1 flex-col bg-white">
          <ArchiveBanner />
          <SiteHeader />
          <SiteMain />
          <SiteFooter />
          <div className="absolute bottom-0 left-0 flex h-[42px] w-1/3 items-center rounded-tr-[6px] border-t border-r border-b-2 border-black bg-[#35363a] pl-[11px] font-[Inter] text-[22px] text-[#a3a4a6] shadow-[0_0_20px_rgba(0,0,0,0.35)]">
            Waiting for web.archive.org...
          </div>
        </div>
        <DownloadsBar />
      </div>
    </div>
  );
}
